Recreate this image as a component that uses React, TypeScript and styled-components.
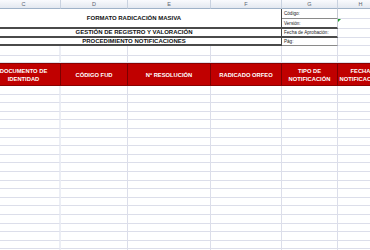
import React from 'react';
import styled, { createGlobalStyle } from 'styled-components';

const GlobalStyle = createGlobalStyle`
  html, body {
    margin: 0;
    padding: 0;
    background: #ffffff;
    overflow: hidden;
  }
  body {
    font-family: 'Liberation Sans', sans-serif;
  }
`;

const columns = ['C', 'D', 'E', 'F', 'G', 'H'];
const headers = [
  ['DOCUMENTO DE', 'IDENTIDAD'],
  ['CÓDIGO FUD'],
  ['Nº RESOLUCIÓN'],
  ['RADICADO ORFEO'],
  ['TIPO DE', 'NOTIFICACIÓN'],
  ['FECHA', 'NOTIFICACIÓN'],
];
const DATA_ROWS = 20;

const App = () => {
  return (
    <>
      <GlobalStyle />
      <Sheet>
        {columns.map((c) => (
          <ColHead key={c}>{c}</ColHead>
        ))}

        <Title $rows={2}>FORMATO RADICACIÓN MASIVA</Title>
        <Label $thick={false}>Código:</Label>
        <Cell />
        <Label $thick>Versión:</Label>
        <Cell>
          <Marker />
        </Cell>

        <Title $rows={1}>GESTIÓN DE REGISTRO Y VALORACIÓN</Title>
        <Label $thick>Fecha de Aprobación:</Label>
        <Cell />
        <Title $rows={1}>PROCEDIMIENTO NOTIFICACIONES</Title>
        <Label $thick={false}>Pág:</Label>
        <Cell />

        {Array.from({ length: 12 }).map((_, i) => (
          <Cell key={'gap' + i} $first={i % 6 === 0} />
        ))}

        {headers.map((lines, i) => (
          <RedHead key={i}>
            {lines.map((l) => (
              <span key={l}>{l}</span>
            ))}
          </RedHead>
        ))}

        {Array.from({ length: DATA_ROWS * 6 }).map((_, i) => (
          <Cell key={i} $first={i % 6 === 0} />
        ))}
      </Sheet>
    </>
  );
};

export default App;

const Sheet = styled.div`
  display: grid;
  grid-template-columns: 74px 67px 83px 71px 56px 46px;
  grid-template-rows: 9px 10px 10px 8.5px 8.5px 9.5px 7.5px 23px repeat(${DATA_ROWS}, 8.6px);
  margin-left: -13px;
  width: 397px;
`;

const ColHead = styled.div`
  box-sizing: border-box;
  background: linear-gradient(#f9fafd, #e3e8f0);
  border-right: 1px solid #c9d2e0;
  border-bottom: 1px solid #9fb2c8;
  color: #5c6470;
  font-size: 5.5px;
  display: flex;
  align-items: center;
  justify-content: center;
`;

const Cell = styled.div<{ $first?: boolean }>`
  box-sizing: border-box;
  position: relative;
  border-right: ${(p) => (p.$first ? '2px solid #eceef5' : '1px solid #dcdeea')};
  border-bottom: 1px solid #dcdeea;
`;

const Title = styled.div<{ $rows: number }>`
  grid-column: span 4;
  grid-row: span ${(p) => p.$rows};
  box-sizing: border-box;
  border-right: 1px solid #444;
  border-bottom: 2px solid #4a4a4a;
  display: flex;
  align-items: center;
  justify-content: center;
  color: #111;
  font-weight: 700;
  font-size: 6px;
  white-space: nowrap;
`;

const Label = styled.div<{ $thick: boolean }>`
  box-sizing: border-box;
  border-right: 1px solid #c8cad4;
  border-bottom: ${(p) => (p.$thick ? '2px solid #4a4a4a' : '1px solid #8a8a8a')};
  display: flex;
  align-items: center;
  padding-left: 2px;
  color: #222;
  font-size: 4.6px;
  white-space: nowrap;
  overflow: hidden;
`;

const Marker = styled.div`
  position: absolute;
  top: 0;
  left: 0;
  width: 0;
  height: 0;
  border-top: 3px solid #1f9a2b;
  border-right: 3px solid transparent;
`;

const RedHead = styled.div`
  box-sizing: border-box;
  background: #c00000;
  border-right: 1px solid #7c0000;
  border-top: 1px solid #8a0000;
  border-bottom: 1px solid #8a0000;
  display: flex;
  flex-direction: column;
  align-items: center;
  justify-content: center;
  gap: 2px;
  color: #ffffff;
  font-weight: 700;
  font-size: 5.8px;
  line-height: 6px;
  white-space: nowrap;
  overflow: hidden;
`;
